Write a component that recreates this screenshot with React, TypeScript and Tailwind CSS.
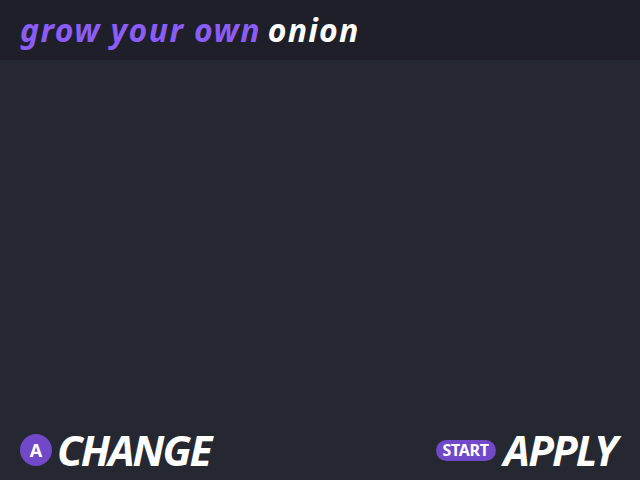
export default function App() {
  return (
    <div className="w-[640px] h-[480px] flex flex-col bg-[#252831] overflow-hidden" style={{ fontFamily: '"Noto Sans", "Open Sans", sans-serif' }}>
      <div className="h-[60px] bg-[#1e1f29] flex items-center px-5 shrink-0">
        <span className="text-[32px] font-bold italic tracking-[1.4px] leading-none text-[#8b5cf6]">grow your own</span>
        <span className="text-[32px] font-bold italic tracking-[1.2px] leading-none text-white ml-[7px]">onion</span>
      </div>
      <div className="flex-1" />
      <div className="h-[60px] flex items-center justify-between pl-5 pr-6">
        <div className="flex items-center gap-[5px]">
          <div className="w-8 h-8 rounded-full bg-[#7048c8] flex items-center justify-center text-white font-bold text-[18px] leading-none">A</div>
          <span className="text-[42px] font-bold italic leading-none text-white tracking-[-2px]">CHANGE</span>
        </div>
        <div className="flex items-center gap-[8px]">
          <div className="h-[21px] w-[60px] rounded-full bg-[#7048c8] flex items-center justify-center text-white font-bold text-[16px] leading-none tracking-[-0.3px]">START</div>
          <span className="text-[42px] font-bold italic leading-none text-white tracking-[-1.8px]">APPLY</span>
        </div>
      </div>
    </div>
  );
}
